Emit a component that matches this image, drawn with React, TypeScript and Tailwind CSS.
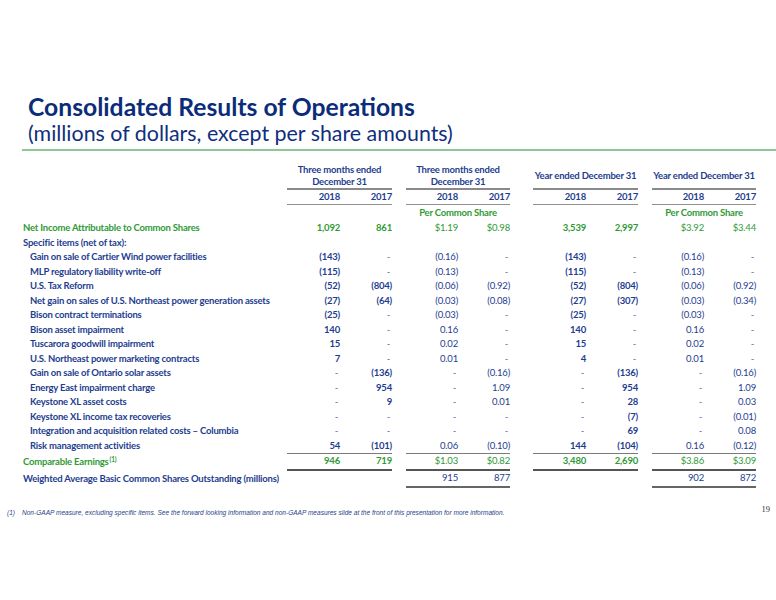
const cols =
  "grid grid-cols-[264px_53px_52px_14px_52px_52px_23px_53px_52px_14px_52px_52px]";

type Row = {
  label: string;
  indent?: boolean;
  green?: boolean;
  sup?: boolean;
  v: string[] | null;
  line?: "single" | "double" | "shares";
};

const rows: Row[] = [
  {
    label: "Net Income Attributable to Common Shares",
    green: true,
    v: ["1,092", "861", "$1.19", "$0.98", "3,539", "2,997", "$3.92", "$3.44"],
  },
  { label: "Specific items (net of tax):", v: null },
  { label: "Gain on sale of Cartier Wind power facilities", indent: true, v: ["(143)", "-", "(0.16)", "-", "(143)", "-", "(0.16)", "-"] },
  { label: "MLP regulatory liability write-off", indent: true, v: ["(115)", "-", "(0.13)", "-", "(115)", "-", "(0.13)", "-"] },
  { label: "U.S. Tax Reform", indent: true, v: ["(52)", "(804)", "(0.06)", "(0.92)", "(52)", "(804)", "(0.06)", "(0.92)"] },
  { label: "Net gain on sales of U.S. Northeast power generation assets", indent: true, v: ["(27)", "(64)", "(0.03)", "(0.08)", "(27)", "(307)", "(0.03)", "(0.34)"] },
  { label: "Bison contract terminations", indent: true, v: ["(25)", "-", "(0.03)", "-", "(25)", "-", "(0.03)", "-"] },
  { label: "Bison asset impairment", indent: true, v: ["140", "-", "0.16", "-", "140", "-", "0.16", "-"] },
  { label: "Tuscarora goodwill impairment", indent: true, v: ["15", "-", "0.02", "-", "15", "-", "0.02", "-"] },
  { label: "U.S. Northeast power marketing contracts", indent: true, v: ["7", "-", "0.01", "-", "4", "-", "0.01", "-"] },
  { label: "Gain on sale of Ontario solar assets", indent: true, v: ["-", "(136)", "-", "(0.16)", "-", "(136)", "-", "(0.16)"] },
  { label: "Energy East impairment charge", indent: true, v: ["-", "954", "-", "1.09", "-", "954", "-", "1.09"] },
  { label: "Keystone XL asset costs", indent: true, v: ["-", "9", "-", "0.01", "-", "28", "-", "0.03"] },
  { label: "Keystone XL income tax recoveries", indent: true, v: ["-", "-", "-", "-", "-", "(7)", "-", "(0.01)"] },
  { label: "Integration and acquisition related costs – Columbia", indent: true, v: ["-", "-", "-", "-", "-", "69", "-", "0.08"] },
  { label: "Risk management activities", indent: true, v: ["54", "(101)", "0.06", "(0.10)", "144", "(104)", "0.16", "(0.12)"], line: "single" },
  {
    label: "Comparable Earnings",
    sup: true,
    green: true,
    v: ["946", "719", "$1.03", "$0.82", "3,480", "2,690", "$3.86", "$3.09"],
    line: "double",
  },
  {
    label: "Weighted Average Basic Common Shares Outstanding (millions)",
    v: ["", "", "915", "877", "", "", "902", "872"],
    line: "shares",
  },
];

function TableRow({ row, h }: { row: Row; h: string }) {
  const color = row.green ? "text-[#2f9a35]" : "text-[#1e3d8f]";
  const cells = [];
  for (let g = 0; g < 4; g++) {
    const perShare = g === 1 || g === 3;
    let border = "";
    if (row.line === "single") border = "border-b border-[#7a7a7a]";
    if (row.line === "double") border = "border-b-2 border-[#555555]";
    if (row.line === "shares" && perShare) border = "border-b-2 border-[#666666]";
    for (let k = 0; k < 2; k++) {
      const val = row.v ? row.v[g * 2 + k] : "";
      const dash = val === "-";
      cells.push(
        <div
          key={`${g}-${k}`}
          className={`${border} flex items-center justify-end ${
            perShare || dash || row.line === "shares" ? "font-normal" : "font-bold"
          } ${dash ? "pr-[2px] text-[#5b6fae]" : ""}`}
        >
          {val}
        </div>
      );
    }
    if (g < 3) cells.push(<div key={`s${g}`} />);
  }
  return (
    <div className={`${cols} ${h} ${color}`}>
      <div className={`flex items-center font-bold whitespace-nowrap ${row.indent ? "pl-[7px]" : ""}`}>
        {row.label}
        {row.sup && <sup className="text-[6.5px] ml-[1px] -top-[3px]">(1)</sup>}
      </div>
      {cells}
    </div>
  );
}

export default function App() {
  const groupLine = "border-b-2 border-[#8a8a8a]";
  const yearLine = "border-b border-[#8f8f8f]";
  return (
    <div className="w-[776px] h-[600px] bg-white overflow-hidden font-['Lato',sans-serif] relative">
      <div className="pt-[93px] pl-[28px]">
        <h1 className="text-[24.7px] leading-[28px] font-bold text-[#0b2d79]">
          Consolidated Results of Operations
        </h1>
        <p className="text-[21.4px] leading-[25px] text-[#0f2f7d]">
          (millions of dollars, except per share amounts)
        </p>
      </div>
      <div className="ml-[22px] mt-[3px] h-[2px] bg-[#8cc995]" />

      <div className="ml-[23px] mt-[12px] text-[9.5px] tracking-[-0.2px]">
        {/* group headers */}
        <div className={`${cols} h-[27px] font-bold text-[#1e3d8f] leading-[12px]`}>
          <div />
          <div className={`col-span-2 ${groupLine} flex items-center justify-center text-center`}>
            Three months ended
            <br />
            December 31
          </div>
          <div />
          <div className={`col-span-2 ${groupLine} flex items-center justify-center text-center`}>
            Three months ended
            <br />
            December 31
          </div>
          <div />
          <div className={`col-span-2 ${groupLine} flex items-center justify-center whitespace-nowrap`}>
            Year ended December 31
          </div>
          <div />
          <div className={`col-span-2 ${groupLine} flex items-center justify-center whitespace-nowrap`}>
            Year ended December 31
          </div>
        </div>

        {/* years */}
        <div className={`${cols} h-[15px] font-bold text-[#1e3d8f]`}>
          <div />
          {[0, 1, 2, 3].map((g) => [
            <div key={`a${g}`} className={`${yearLine} flex items-center justify-end`}>2018</div>,
            <div key={`b${g}`} className={`${yearLine} flex items-center justify-end`}>2017</div>,
            g < 3 ? <div key={`c${g}`} /> : null,
          ])}
        </div>

        {/* per common share */}
        <div className={`${cols} h-[16px] font-bold text-[#2f9a35]`}>
          <div />
          <div className="col-span-2" />
          <div />
          <div className="col-span-2 flex items-center justify-center pt-[1px]">Per Common Share</div>
          <div />
          <div className="col-span-2" />
          <div />
          <div className="col-span-2 flex items-center justify-center pt-[1px]">Per Common Share</div>
        </div>

        {rows.map((r, i) => (
          <TableRow
            key={i}
            row={r}
            h={r.line === "double" ? "h-[17px]" : r.line === "shares" ? "h-[17px]" : r.line === "single" ? "h-[15.5px]" : "h-[14.5px]"}
          />
        ))}
      </div>

      <div className="absolute left-[7px] top-[508px] flex items-center text-[6.55px] italic text-[#2b3f86] font-['Liberation_Sans',sans-serif]">
        <span className="w-[15px]">(1)</span>
        <span>
          Non-GAAP measure, excluding specific items. See the forward looking information and non-GAAP measures slide at the front of this presentation for more information.
        </span>
      </div>
      <div className="absolute right-[6px] top-[503px] text-[8.5px] text-[#333333] font-['Liberation_Serif',serif]">
        19
      </div>
    </div>
  );
}
